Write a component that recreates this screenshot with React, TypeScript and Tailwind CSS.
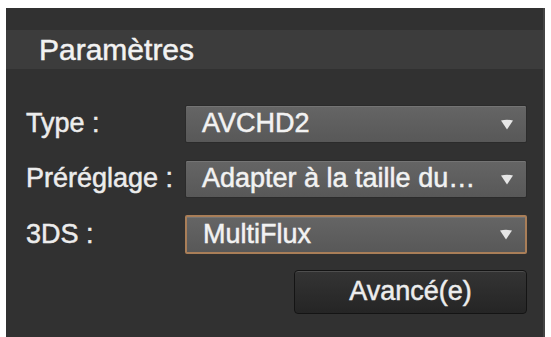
import { ReactNode } from "react";

function Arrow() {
  return (
    <svg width="14" height="11" viewBox="0 0 14 11" className="shrink-0">
      <path d="M1 1.5 Q7 0.2 13 1.5 L7 10.5 Z" fill="#e6e6e6" />
    </svg>
  );
}

function Select(props: { value: string; active?: boolean }) {
  return (
    <div
      className={
        "flex items-center justify-between rounded-[2px] pl-[16px] pr-[12px] bg-gradient-to-b from-[#656565] to-[#585858] shadow-[inset_0_1px_0_#747474] " +
        (props.active
          ? "h-[39px] border-2 border-[#a97e58] shadow-[inset_0_0_0_1px_#3a3330]"
          : "h-[38px] border border-[#2b2b2b]")
      }
    >
      <span className="whitespace-nowrap text-[#f2f2f2]">{props.value}</span>
      <Arrow />
    </div>
  );
}

function Label(props: { children: ReactNode }) {
  return <div className="flex items-center text-[#ececec]">{props.children}</div>;
}

export default function App() {
  return (
    <div
      className="w-[551px] h-[337px] bg-white pt-[8px] pl-[6px] pr-[6px] flex overflow-hidden [-webkit-text-stroke:0.5px_currentColor]"
      style={{ fontFamily: '"Liberation Sans", Arial, sans-serif' }}
    >
      <div className="flex-1 flex flex-col bg-[#313131] border-r-2 border-[#444444]">
        <div className="mt-[22px] h-[39px] bg-[#3c3c3c] flex items-center pl-[33px] text-[30px] text-[#f2f2f2]">
          Paramètres
        </div>
        <div className="pt-[36px] pl-[20px] flex flex-col text-[27px] leading-[1.15]">
          <div className="grid grid-cols-[159px_342px] gap-y-[17px]">
            <Label>Type :</Label>
            <Select value="AVCHD2" />
            <Label>Préréglage :</Label>
            <Select value="Adapter à la taille du…" />
            <Label>3DS :</Label>
            <Select value="MultiFlux" active />
          </div>
          <div className="flex justify-end w-[501px] mt-[16px]">
            <button className="w-[233px] h-[44px] rounded-[4px] border border-[#141414] bg-gradient-to-b from-[#343434] to-[#252525] shadow-[inset_0_1px_0_#4e4e4e] text-[#ededed] text-[27px]">
              Avancé(e)
            </button>
          </div>
        </div>
      </div>
    </div>
  );
}
